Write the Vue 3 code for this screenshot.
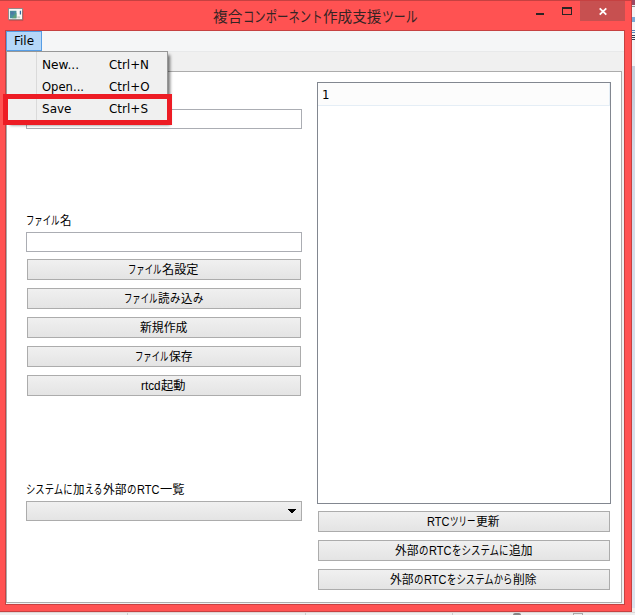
<script setup>
import { h, ref } from 'vue'

// Each label is a list of runs: [text, advance width in px].
const GlyphLine = (props) => {
  const size = props.size || 12
  const height = props.height || 16
  const width = props.runs.reduce((sum, run) => sum + run[1], 0)
  let x = 0
  const children = props.runs.map(([text, advance]) => {
    const node = h('text', {
      x, y: props.base || 12, 'font-size': size,
      textLength: advance - 0.5, lengthAdjust: 'spacingAndGlyphs'
    }, text)
    x += advance
    return node
  })
  return h('svg', { width, height, viewBox: `0 0 ${width} ${height}`, fill: 'currentColor' }, children)
}
GlyphLine.props = ['runs', 'size', 'height', 'base']

const title = [['複合', 30], ['コンポーネント', 80], ['作成支援', 59], ['ツール', 36]]
const fileLabel = [['ファイル', 34], ['名', 12]]
const rtcLabel = [['システムに', 47], ['加', 12], ['える', 18], ['外部', 24], ['の', 10], ['RTC', 23], ['一覧', 25]]
const fileButtons = [
  [['ファイル', 34], ['名設定', 37]],
  [['ファイル', 34], ['読', 12], ['み', 11], ['込', 12], ['み', 11]],
  [['新規作成', 48]],
  [['ファイル', 34], ['保存', 24]],
  [['rtcd', 20], ['起動', 25]]
]
const treeButtons = [
  [['RTC', 23], ['ツリー', 26], ['更新', 24]],
  [['外部', 24], ['の', 10], ['RTC', 23], ['をシステムに', 57], ['追加', 24]],
  [['外部', 24], ['の', 10], ['RTC', 23], ['をシステムから', 66], ['削除', 24]]
]
const menuItems = [
  { label: [['New...', 37.5]], key: [['Ctrl+N', 40.5]] },
  { label: [['Open...', 42.5]], key: [['Ctrl+O', 41]] },
  { label: [['Save', 30]], key: [['Ctrl+S', 39.5]] }
]
const fileName = ref('')
const systemName = ref('')
</script>

<template>
  <div class="desktop">
    <main class="window">
      <header class="titlebar">
        <svg class="app-icon" width="15" height="13" viewBox="0 0 16 14">
          <rect x=".5" y=".5" width="15" height="12" fill="#f8f8f6" stroke="#8e8585" />
          <rect x="2" y="3" width="7" height="8" fill="#4a8f9e" />
          <path d="M3 4h3v3H3z" fill="#4d78a5" />
          <path d="M5 10l4-5v6H4z" fill="#5da17c" />
          <rect x="12.6" y="3" width="1.4" height="4" fill="#346da0" />
          <rect x="10" y="9" width="3" height="2" fill="#c8cdc8" />
          <path d="M1 13.5h15V3" fill="none" stroke="#9d4c4c" stroke-opacity=".55" />
        </svg>
        <GlyphLine class="title" :runs="title" :size="15" :height="22" :base="17" />
        <div class="controls">
          <svg class="minimize" width="8" height="2" viewBox="0 0 8 2"><path d="M0 0h8v2H0z" fill="#2b2424" /></svg>
          <svg class="maximize" width="10" height="8" viewBox="0 0 10 8"><path fill-rule="evenodd" d="M0 0h10v8H0zM1 2v5h8V2z" fill="#2b2424" /></svg>
          <button class="close" aria-label="close">
            <svg width="8" height="7" viewBox="0 0 8 7"><path d="M.7.3l6.6 6.4M7.3.3L.7 6.7" stroke="#fff" stroke-width="1.8" /></svg>
          </button>
        </div>
      </header>

      <section class="client">
        <nav class="menubar">
          <div class="menu-title"><GlyphLine :runs="[['File', 20.5]]" :size="12.5" /></div>
        </nav>
        <div class="tabs"></div>
        <div class="panel">
          <div class="column left">
            <input v-model="systemName" class="field first">
            <GlyphLine class="label file-label" :runs="fileLabel" :base="12.6" />
            <input v-model="fileName" class="field">
            <div class="buttons file-buttons">
              <button v-for="(runs, i) in fileButtons" :key="i" class="push"><GlyphLine :runs="runs" :base="12.6" /></button>
            </div>
            <GlyphLine class="label rtc-label" :runs="rtcLabel" :base="12.6" />
            <div class="combo">
              <svg width="8" height="4" viewBox="0 0 8 4" shape-rendering="crispEdges"><path d="M0 0h8v1H7v1H6v1H5v1H3V3H2V2H1V1H0z" /></svg>
            </div>
          </div>
          <div class="column right">
            <div class="tree"><div class="tree-row"><GlyphLine :runs="[['1', 8]]" :size="12" /></div></div>
            <div class="buttons tree-buttons">
              <button v-for="(runs, i) in treeButtons" :key="i" class="push"><GlyphLine :runs="runs" :base="12.6" /></button>
            </div>
          </div>
        </div>
      </section>
    </main>
    <aside class="behind"></aside>
    <footer class="under"><i></i><i></i><i></i><b></b><u></u></footer>

    <div class="dropdown">
      <div v-for="(item, i) in menuItems" :key="i" class="menu-item">
        <span class="item-name"><GlyphLine :runs="item.label" :size="12.5" /></span>
        <GlyphLine :runs="item.key" :size="12.5" />
      </div>
    </div>
    <div class="highlight"></div>
  </div>
</template>

<style>
body { margin: 0; overflow: hidden; }
</style>

<style scoped>
* { box-sizing: border-box; }
svg { display: block; flex: none; overflow: visible; }
.desktop {
  position: relative; width: 635px; height: 615px; overflow: hidden;
  display: grid; grid-template: 612px 3px / 632px 3px;
  font-family: "Liberation Sans", "Noto Sans CJK JP", sans-serif; color: #000;
}
.window {
  background: #ff5252; border: solid #c64141; border-width: 1px 1px 1px 0;
  padding: 0 6px 6px 5px; display: flex; flex-direction: column;
}
.titlebar { height: 29px; flex: none; display: flex; color: #352424; }
.app-icon { margin: 7px 0 0 3px; }
.title { margin: 4px 0 0 190px; }
.controls { display: flex; margin-left: auto; }
.minimize { margin: 12px 18px 0 0; }
.maximize { margin: 6px 8px 0 0; }
.close {
  width: 45px; height: 20px; border: 0; padding: 0; background: #c75050;
  display: flex; align-items: center; justify-content: center;
}
.client {
  width: 620px; height: 575px; border: 1px solid #c64141; background: #f0f0f0;
  display: flex; flex-direction: column;
}
.menubar { height: 21px; flex: none; background: #f5f6f7; border-bottom: 1px solid #e8e9ea; }
.menu-title {
  width: 36px; height: 20px; background: #b5d7f8; border: 1px solid #569de5;
  padding: 1px 0 0 7px; font-family: "DejaVu Sans", sans-serif;
}
.tabs { height: 19px; flex: none; }
.panel {
  width: 616px; height: 532px; background: #fff; border: 1px solid #acacac;
  display: flex; padding: 10px 10px 0 19px; gap: 15px;
}
.column { display: flex; flex-direction: column; flex: none; }
.left { width: 276px; padding-top: 27px; }
.right { width: 294px; }
.field {
  width: 276px; height: 20px; flex: none; border: 1px solid #abadb3; background: #fff;
  margin: 0; padding: 0 2px; outline: none; font: 12px "Liberation Sans", sans-serif;
}
.label { margin-left: -0.5px; }
.file-label { margin-top: 83px; margin-bottom: 4px; }
.buttons { display: flex; flex-direction: column; gap: 8px; }
.file-buttons { margin-top: 7px; padding: 0 1px; }
.tree-buttons { margin-top: 7px; padding: 0 1px; }
.push {
  height: 21px; flex: none; padding: 0 1px 2px 0; border: 1px solid #acacac; color: #000;
  background: linear-gradient(#f0f0f0, #e4e4e4); display: flex; align-items: center;
  justify-content: center; font-family: inherit;
}
.rtc-label { margin-top: 85px; margin-bottom: 4px; }
.combo {
  height: 20px; border: 1px solid #acacac; background: linear-gradient(#f0f0f0, #e4e4e4);
  display: flex; align-items: center; justify-content: flex-end; padding-right: 5px;
}
.tree { height: 422px; flex: none; border: 1px solid #828790; background: #fff; }
.tree-row {
  height: 23px; background: #fcfcfc; border: solid #e5eef6; border-width: 0 1px 1px 0;
  padding: 4px 0 0 4px; font-family: "DejaVu Sans", sans-serif;
}
.behind {
  background: linear-gradient(#9b4964 0 5px, #eceff2 5px 6px, #8c8c91 6px 7px, #f4f5f7 7px 17px,
    #78aad7 17px 22px, #f4f5f7 22px 30px, #5382ba 30px 31px, #f4f5f7 31px 32px, #5382ba 32px 33px,
    #f4f5f7 33px 35px, #343c50 35px 36px, #f4f5f7 36px 37px, #343c50 37px 38px, #f4f5f7 38px 39px,
    #343c50 39px 40px, #f4f5f7 40px 66px, #c6cfdd 66px 90px, #d3dce9 150px, #dbe4ef 608px, #f0f0f0 608px);
}
.under { grid-column: 1 / 3; background: #efefef; border-top: 1px solid #ddd7d7; display: flex; }
.under i { width: 1px; height: 2px; background: #cdcdcd; margin-left: 127px; }
.under i + i { margin-left: 177px; }
.under i + i + i { margin-left: 146px; }
.under b { width: 8px; height: 2px; margin-left: 60px; background: #858585; border-radius: 4px 4px 0 0; }
.under u { width: 10px; height: 3px; margin-left: 52px; border: 1px solid #aaa; border-bottom: 0; }
.dropdown {
  position: absolute; left: 6px; top: 51px; width: 162px; height: 72px; padding-top: 2px;
  border: 1px solid #979797; background: linear-gradient(90deg, #f0f0f0 29px, #dadada 29px 30px, #f0f0f0 30px);
  box-shadow: 3px 3px 3px -1px rgba(0, 0, 0, .55); font-family: "DejaVu Sans", sans-serif;
}
.menu-item { height: 22px; display: flex; align-items: center; padding-left: 35px; }
.item-name { width: 67px; flex: none; }
.highlight { position: absolute; left: 3px; top: 94px; width: 169px; height: 31px; border: 5px solid #ed1c24; }
</style>
